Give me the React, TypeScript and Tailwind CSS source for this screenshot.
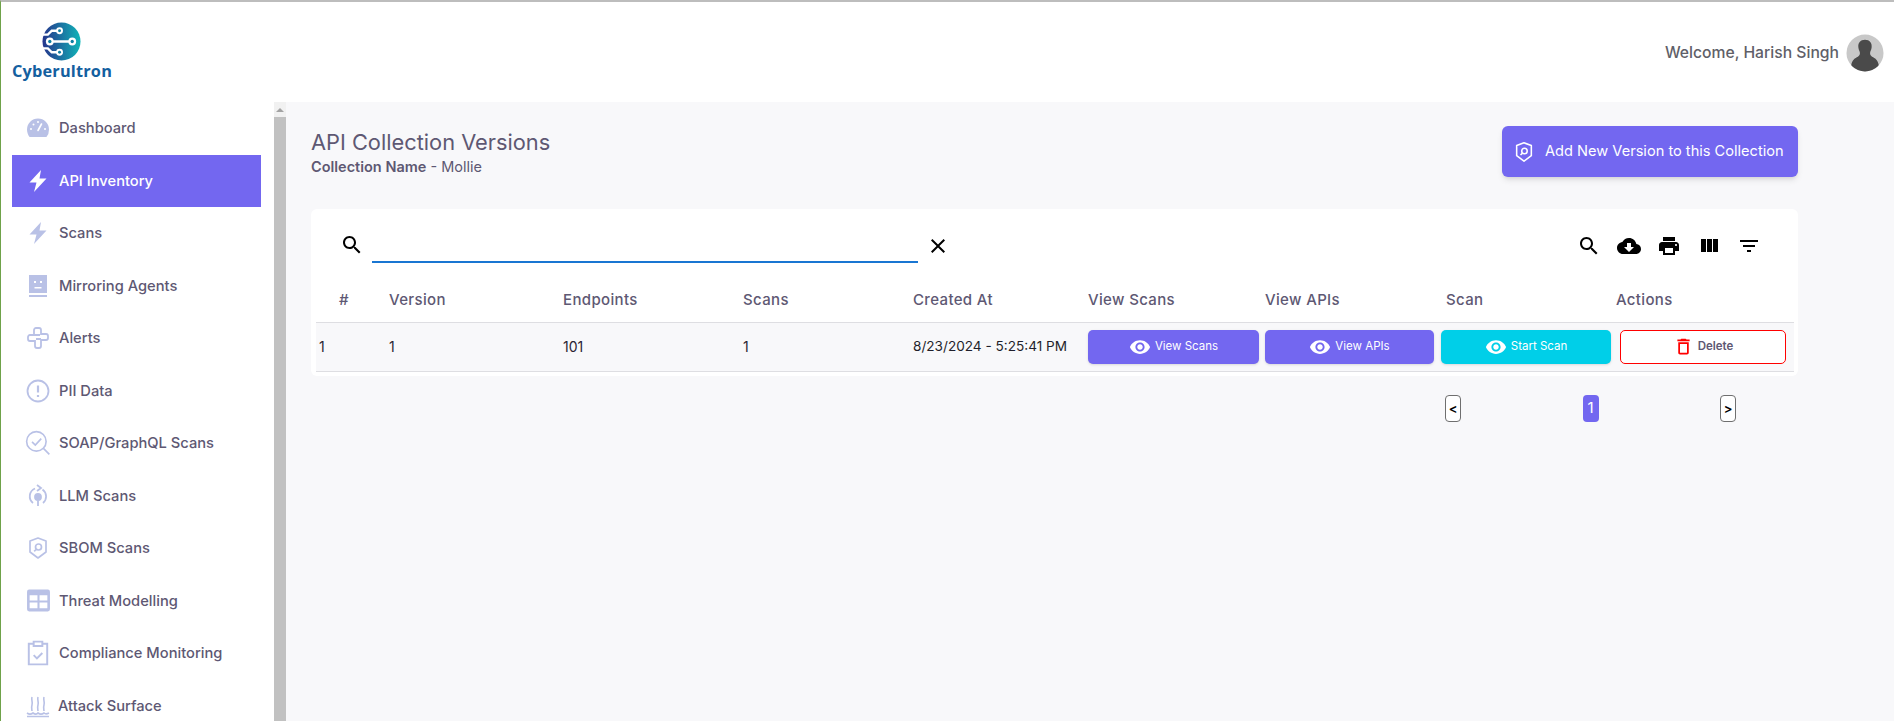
import React from "react";

const font = "font-['Inter','Liberation_Sans',sans-serif]";

const Mui = ({ d, className }: { d: string; className: string }) => (
  <svg viewBox="0 0 24 24" fill="currentColor" className={className}>
    <path d={d} />
  </svg>
);

const paths = {
  search: "M15.5 14h-.79l-.28-.27C15.41 12.59 16 11.11 16 9.5 16 5.91 13.09 3 9.5 3S3 5.91 3 9.5 5.91 16 9.5 16c1.61 0 3.09-.59 4.23-1.57l.27.28v.79l5 4.99L20.49 19l-4.99-5zm-6 0C7.01 14 5 11.99 5 9.5S7.01 5 9.5 5 14 7.01 14 9.5 11.99 14 9.5 14z",
  cloud: "M19.35 10.04C18.67 6.59 15.64 4 12 4 9.11 4 6.6 5.64 5.35 8.04 2.34 8.36 0 10.91 0 14c0 3.31 2.69 6 6 6h13c2.76 0 5-2.24 5-5 0-2.64-2.05-4.78-4.65-4.96zM17 13l-5 5-5-5h3V9h4v4h3z",
  print: "M19 8H5c-1.66 0-3 1.34-3 3v6h4v4h12v-4h4v-6c0-1.66-1.34-3-3-3zm-3 11H8v-5h8v5zm3-7c-.55 0-1-.45-1-1s.45-1 1-1 1 .45 1 1-.45 1-1 1zm-1-9H6v4h12V3z",
  columns: "M10 18h5V5h-5v13zm-6 0h5V5H4v13zM16 5v13h5V5h-5z",
  filter: "M10 18h4v-2h-4v2zM3 6v2h18V6H3zm3 7h12v-2H6v2z",
  close: "M19 6.41L17.59 5 12 10.59 6.41 5 5 6.41 10.59 12 5 17.59 6.41 19 12 13.41 17.59 19 19 17.59 13.41 12z",
  eye: "M12 4.5C7 4.5 2.73 7.61 1 12c1.73 4.39 6 7.5 11 7.5s9.27-3.11 11-7.5c-1.73-4.39-6-7.5-11-7.5zM12 17c-2.76 0-5-2.24-5-5s2.24-5 5-5 5 2.24 5 5-2.24 5-5 5zm0-8c-1.66 0-3 1.34-3 3s1.34 3 3 3 3-1.34 3-3-1.34-3-3-3z",
  trash: "M6 19c0 1.1.9 2 2 2h8c1.1 0 2-.9 2-2V7H6v12zM8 9h8v10H8V9zm7.5-5l-1-1h-5l-1 1H5v2h14V4z",
  bolt: "M15 1 3.500 13.500H10.500L8 23 20.500 9.500H13.500z",
};

const ShieldSearch = ({ className }: { className: string }) => (
  <svg viewBox="0 0 24 24" fill="none" stroke="currentColor" strokeWidth="1.7" className={className}>
    <path d="M12 2 20 5v11l-8 6-8-6V5z" strokeLinejoin="round" />
    <circle cx="12.5" cy="11" r="3" />
    <path d="m10 13.500-1.800 1.800" />
  </svg>
);

const icons: Record<string, React.ReactNode> = {
  Dashboard: (
    <svg viewBox="0 0 24 24" className="w-[24px] h-[24px]">
      <path fill="currentColor" d="M12 2.500A11 11 0 0 0 1 13.500c0 2.900 1 5.500 2.600 7.500h16.800A11 11 0 0 0 23 13.500 11 11 0 0 0 12 2.500z" />
      <path stroke="#fff" strokeWidth="1.6" strokeLinecap="round" d="M12 14.500 15.500 8" />
      <g fill="#fff">
        <circle cx="5" cy="13" r="1" />
        <circle cx="7.500" cy="8.500" r="1" />
        <circle cx="12" cy="6" r="1" />
        <circle cx="19" cy="13" r="1" />
      </g>
    </svg>
  ),
  "API Inventory": <Mui d={paths.bolt} className="w-[24px] h-[24px] text-white" />,
  Scans: <Mui d={paths.bolt} className="w-[24px] h-[24px]" />,
  "Mirroring Agents": (
    <svg viewBox="0 0 24 24" className="w-[24px] h-[24px]">
      <path fill="currentColor" d="M3 1h18v18H3zM3 21h18v2H3z" />
      <path fill="#fff" d="M8 7h2v2H8zM14 7h2v2h-2zM8.500 13h7v1.500h-7z" />
    </svg>
  ),
  Alerts: (
    <svg viewBox="0 0 24 24" fill="none" stroke="currentColor" strokeWidth="1.8" className="w-[24px] h-[24px]">
      <path d="M8 9V4a2 2 0 0 1 2-2h3a2 2 0 0 1 2 2v4h5a2 2 0 0 1 2 2v2a2 2 0 0 1-2 2h-5M15 13h-5M9 9h5M9 9H4a2 2 0 0 0-2 2v2a2 2 0 0 0 2 2h5v5a2 2 0 0 0 2 2h2a2 2 0 0 0 2-2v-7" />
    </svg>
  ),
  "PII Data": (
    <svg viewBox="0 0 24 24" fill="none" stroke="currentColor" strokeWidth="1.8" className="w-[24px] h-[24px]">
      <circle cx="12" cy="12" r="10.500" />
      <path d="M12 6.500v7M12 16v2" strokeWidth="2.2" />
    </svg>
  ),
  "SOAP/GraphQL Scans": (
    <svg viewBox="0 0 24 24" fill="none" stroke="currentColor" strokeWidth="1.5" className="w-[26px] h-[26px]">
      <circle cx="10.500" cy="10.500" r="9" />
      <path d="m17 17 5.500 5.500M6.500 11l3 3 5.500-6" />
    </svg>
  ),
  "LLM Scans": (
    <svg viewBox="0 0 24 24" fill="none" stroke="currentColor" strokeWidth="1.8" className="w-[24px] h-[24px]">
      <path d="M7 19a8.500 8.500 0 0 1 2-14.500M16.500 5.500A8.500 8.500 0 0 1 17 19" />
      <path d="m11 1 4 3-4 3" />
      <circle cx="12" cy="13" r="3" fill="currentColor" />
      <path d="M12 17v5" />
    </svg>
  ),
  "SBOM Scans": <ShieldSearch className="w-[24px] h-[24px]" />,
  "Threat Modelling": (
    <svg viewBox="0 0 24 24" className="w-[25px] h-[25px]">
      <path fill="currentColor" d="M3 1.500h18a2 2 0 0 1 2 2v17a2 2 0 0 1-2 2H3a2 2 0 0 1-2-2v-17a2 2 0 0 1 2-2z" />
      <path fill="#fff" d="M3.500 7h7.500v5H3.500zM13 7h7.500v5H13zM3.500 14h7.500v5.500H3.500zM13 14h7.500v5.500H13z" />
    </svg>
  ),
  "Compliance Monitoring": (
    <svg viewBox="0 0 24 24" fill="none" stroke="currentColor" strokeWidth="1.8" className="w-[26px] h-[26px]">
      <path d="M8 3.500H3.500v19h17v-19H16M8 1.500h8v4H8zM8 14l3 3 5-5" />
    </svg>
  ),
  "Attack Surface": (
    <svg viewBox="0 0 24 24" fill="none" stroke="currentColor" strokeWidth="1.6" className="w-[24px] h-[24px]">
      <path d="M6 3c-1 3 1 5 0 8s0 5 0 6M12 3c-1 3 1 5 0 8s0 5 0 6M18 3c-1 3 1 5 0 8s0 5 0 6M1 19c2 1.500 4 1.500 6 0 2 1.500 4 1.500 5 0 2 1.500 4 1.500 6 0 1 1 3 1 5 0M1 22.500h22" />
    </svg>
  ),
};

const menu = Object.keys(icons);

const Logo = () => (
  <div className="flex flex-col items-center w-[100px] ml-[11px] pt-[20px]">
    <svg viewBox="0 0 40 40" className="w-[39px] h-[39px] ml-[-1px]">
      <defs>
        <linearGradient id="lg" x1="0" y1="0.5" x2="1" y2="0.5">
          <stop offset="0" stopColor="#25348c" />
          <stop offset="1" stopColor="#10b5b8" />
        </linearGradient>
      </defs>
      <circle cx="20" cy="20" r="19.500" fill="url(#lg)" />
      <g stroke="#fff" strokeWidth="2.400" fill="none">
        <path d="M8 20H31M18 9H10L6 13H0M18 31H10L6 27H0" />
      </g>
      <g fill="#fff">
        <circle cx="8" cy="20" r="4" />
        <circle cx="31" cy="20" r="4" />
        <circle cx="18" cy="9" r="3.500" />
        <circle cx="18" cy="31" r="3.500" />
      </g>
      <g fill="#0e7fa3">
        <circle cx="8" cy="20" r="1.700" />
        <circle cx="31" cy="20" r="1.700" />
        <circle cx="18" cy="9" r="1.500" />
        <circle cx="18" cy="31" r="1.500" />
      </g>
    </svg>
    <span className="text-[16.3px] leading-[20px] font-bold text-[#14609f] font-['Open_Sans',sans-serif] tracking-[0.2px]">
      Cyberultron
    </span>
  </div>
);

const Sidebar = () => (
  <div className="w-[273px] shrink-0 bg-white">
    {menu.map((m) => (
      <div key={m} className="h-[52.5px] pl-[11px] pr-[13px]">
        <div className={`h-full flex items-center ${m === "API Inventory" ? "bg-[#7367f0] text-white" : "text-[#5e5873]"}`}>
          <span className={`w-[47px] flex justify-center pl-[5px] ${m === "API Inventory" ? "" : "text-[#b9c1e6]"}`}>{icons[m]}</span>
          <span className={`text-[14.7px] font-medium ${m === "Attack Surface" ? "ml-[-1px]" : ""}`}>{m}</span>
        </div>
      </div>
    ))}
  </div>
);

const ActionButton = ({ label, color }: { label: string; color: string }) => (
  <button className={`w-full h-[34px] rounded-[5px] flex items-center justify-center gap-[4px] text-white text-[11.5px] shadow-sm ${color}`}>
    <Mui d={paths.eye} className="w-[22px] h-[22px]" />
    {label}
  </button>
);

const headers = ["#", "Version", "Endpoints", "Scans", "Created At", "View Scans", "View APIs", "Scan", "Actions"];

const Table = () => (
  <table className="table-fixed w-[1478px] mx-[5px] border-collapse text-[14px]">
    <colgroup>
      <col className="w-[73px]" />
      <col className="w-[174px]" />
      <col className="w-[180px]" />
      <col className="w-[170px]" />
      <col className="w-[175px]" />
      <col className="w-[177px]" />
      <col className="w-[176px]" />
      <col className="w-[175px]" />
      <col className="w-[178px]" />
    </colgroup>
    <thead>
      <tr className="h-[42px] border-b border-[#dedee2] text-[#5e5873]">
        {headers.map((h, i) => (
          <th
            key={h}
            className={`text-left font-medium text-[15px] tracking-[0.35px] align-middle pb-[2px] ${i === 0 ? "pl-[23px]" : ""} ${h === "Scan" ? "pl-[5px]" : ""}`}
          >
            {h}
          </th>
        ))}
      </tr>
    </thead>
    <tbody>
      <tr className="h-[49px] bg-[#f8f8fa] border-b border-[#dedee2] text-[#2b2233]">
        <td className="pl-[3px]">1</td>
        <td>1</td>
        <td>101</td>
        <td>1</td>
        <td className="whitespace-nowrap text-[13.6px] text-[#1f1f2b]">8/23/2024 - 5:25:41 PM</td>
        <td className="pr-[6px]"><ActionButton label="View Scans" color="bg-[#7367f0]" /></td>
        <td className="pr-[7px]"><ActionButton label="View APIs" color="bg-[#7367f0]" /></td>
        <td className="pr-[5px]"><ActionButton label="Start Scan" color="bg-[#00cfe8]" /></td>
        <td className="pl-[4px] pr-[8px]">
          <button className="w-full h-[34px] rounded-[5px] border border-[#ff0000] bg-white flex items-center justify-center gap-[4px] text-[11.5px] font-semibold text-[#5e5873]">
            <Mui d={paths.trash} className="w-[21px] h-[21px] text-[#ff0000]" />
            Delete
          </button>
        </td>
      </tr>
    </tbody>
  </table>
);

const Toolbar = () => (
  <div className="h-[71px] flex items-center pl-[29px] pr-[37px] pt-[3px]">
    <Mui d={paths.search} className="w-[24px] h-[24px] text-black mr-[8px] mt-[-3px]" />
    <div className="w-[546px] h-[30px] mt-[3px] border-b-2 border-[#1976d2]" />
    <Mui d={paths.close} className="w-[24px] h-[24px] text-black ml-[8px]" />
    <div className="ml-auto flex items-center gap-[16px] text-black">
      <Mui d={paths.search} className="w-[24px] h-[24px]" />
      <Mui d={paths.cloud} className="w-[24px] h-[24px]" />
      <Mui d={paths.print} className="w-[24px] h-[24px]" />
      <Mui d={paths.columns} className="w-[24px] h-[24px]" />
      <Mui d={paths.filter} className="w-[24px] h-[24px]" />
    </div>
  </div>
);

const Pager = () => (
  <div className="h-[27px] mt-[19px] ml-[1134px] w-[291px] flex justify-between items-center text-[13px] font-semibold">
    <span className="w-[16px] h-[27px] rounded-[4px] border border-[#6f6f6f] bg-white flex items-center justify-center text-black">&lt;</span>
    <span className="w-[16px] h-[27px] rounded-[4px] bg-[#7367f0] flex items-center justify-center text-white text-[15px] font-normal">1</span>
    <span className="w-[16px] h-[27px] rounded-[4px] border border-[#6f6f6f] bg-white flex items-center justify-center text-black">&gt;</span>
  </div>
);

export default function App() {
  return (
    <div className={`h-[721px] overflow-hidden bg-white border-t-2 border-t-[#bdbdbd] border-l border-l-[#6fa24a] flex flex-col ${font}`}>
      <header className="h-[100px] shrink-0 flex justify-between">
        <Logo />
        <div className="flex items-center gap-[7px] pr-[10px] pb-[2px] h-[104px]">
          <span className="text-[15.7px] font-medium text-[#5f5f68]">Welcome, Harish Singh</span>
          <svg viewBox="0 0 40 40" className="w-[38px] h-[38px]">
            <clipPath id="av">
              <circle cx="20" cy="20" r="19.500" />
            </clipPath>
            <g clipPath="url(#av)">
              <rect width="40" height="40" fill="#c8c8c8" />
              <path fill="#4a4a4a" d="M20 6c-5 0-7.500 3.500-7 8 .2 2 .8 3 1.500 5 .5 2-.2 4-2 5-3 1.500-6 3-7 9v7h29v-7c-1-6-4-7.500-7-9-1.800-1-2.500-3-2-5 .7-2 1.300-3 1.500-5 .5-4.500-2-8-7-8z" />
            </g>
          </svg>
        </div>
      </header>
      <div className="flex flex-1 min-h-0">
        <Sidebar />
        <div className="w-[12px] shrink-0 bg-[#f1f1f1] flex flex-col items-center">
          <div className="h-[15px] flex items-center justify-center">
            <div className="w-0 h-0 border-x-[4px] border-x-transparent border-b-[4px] border-b-[#a3a3a3]" />
          </div>
          <div className="flex-1 w-full bg-[#c1c1c1]" />
        </div>
        <main className="flex-1 bg-[#f8f8fa] pl-[25px] text-[#5e5873]">
          <div className="w-[1487px] flex justify-between items-start pt-[24px] h-[107px]">
            <div className="pt-[2px]">
              <h1 className="text-[21.8px] leading-[29px] font-normal">API Collection Versions</h1>
              <p className="text-[14.5px] leading-[20px]">
                <span className="font-semibold">Collection Name</span> - Mollie
              </p>
            </div>
            <button className="w-[296px] h-[51px] rounded-[6px] bg-[#7367f0] text-white flex items-center pl-[11px] gap-[10px] text-[14.6px] shadow-md">
              <ShieldSearch className="w-[22px] h-[22px]" />
              Add New Version to this Collection
            </button>
          </div>
          <section className="w-[1487px] h-[167px] bg-white rounded-[6px]">
            <Toolbar />
            <Table />
          </section>
          <Pager />
        </main>
      </div>
    </div>
  );
}
